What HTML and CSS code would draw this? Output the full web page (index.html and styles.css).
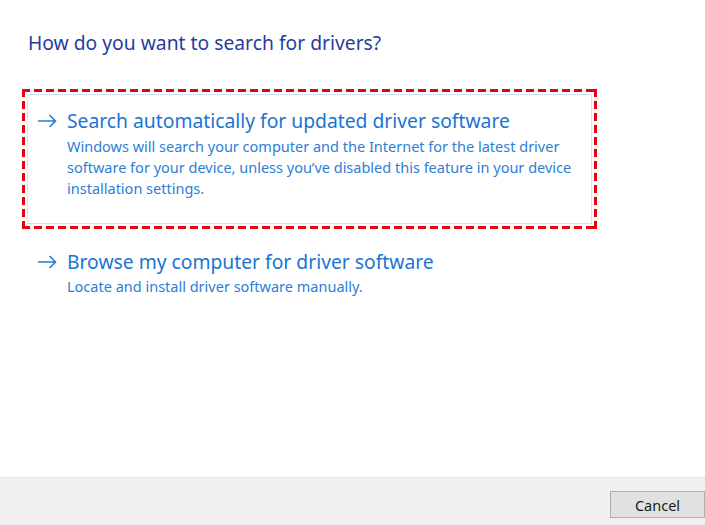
FILE: index.html
```html
<!DOCTYPE html>
<html>
<head>
<meta charset="utf-8">
<link rel="stylesheet" href="styles.css">
</head>
<body>
<div class="dialog">
  <main class="content">
    <h1 class="title">How do you want to search for drivers?</h1>
    <div class="options">
      <div class="frame frame-marked">
        <div class="option option-focused">
          <svg class="arrow" width="20" height="14" viewBox="0 0 20 14"><path d="M1 7H18.5M12.5 1L18.5 7L12.5 13" fill="none" stroke="currentColor" stroke-width="1.6"/></svg>
          <div class="option-text">
            <div class="option-head">Search automatically for updated driver software</div>
            <div class="option-desc">Windows will search your computer and the Internet for the latest driver software for your device, unless you’ve disabled this feature in your device installation settings.</div>
          </div>
        </div>
      </div>
      <div class="frame">
        <div class="option">
          <svg class="arrow" width="20" height="14" viewBox="0 0 20 14"><path d="M1 7H18.5M12.5 1L18.5 7L12.5 13" fill="none" stroke="currentColor" stroke-width="1.6"/></svg>
          <div class="option-text">
            <div class="option-head">Browse my computer for driver software</div>
            <div class="option-desc option-desc-tight">Locate and install driver software manually.</div>
          </div>
        </div>
      </div>
    </div>
  </main>
  <footer class="footer">
    <button class="btn">Cancel</button>
  </footer>
</div>
</body>
</html>
```
FILE: styles.css
```css
html, body {
  margin: 0;
  padding: 0;
  background: #ffffff;
}
body {
  font-family: "Noto Sans", "Open Sans", sans-serif;
}
.dialog {
  width: 705px;
  height: 525px;
  display: flex;
  flex-direction: column;
}
.content {
  flex: 1;
  padding: 0 0 0 22px;
}
.title {
  margin: 30px 0 0 6px;
  font-size: 19.3px;
  font-weight: 400;
  line-height: 26px;
  color: #1f3da0;
}
.options {
  margin-top: 33px;
  display: flex;
  flex-direction: column;
  gap: 1px;
  width: 575px;
}
.frame {
  padding: 5px;
}
.frame-marked {
  background:
    repeating-linear-gradient(90deg, #e8000f 0 8px, transparent 8px 12px) top left / 100% 3px no-repeat,
    repeating-linear-gradient(90deg, #e8000f 0 8px, transparent 8px 12px) bottom left / 100% 3px no-repeat,
    repeating-linear-gradient(180deg, #e8000f 0 8px, transparent 8px 12px) top left / 3px 100% no-repeat,
    repeating-linear-gradient(180deg, #e8000f 0 8px, transparent 8px 12px) top right / 3px 100% no-repeat;
}
.option {
  border: 1px solid transparent;
  display: flex;
  align-items: flex-start;
  padding: 13px 10px 24px 9px;
  color: #1a74d2;
}
.option-focused {
  border-color: #cfe3f6;
}
.arrow {
  flex: none;
  margin-top: 6px;
  width: 20px;
  height: 14px;
  color: #2a7ad2;
}
.option-text {
  margin-left: 10px;
}
.option-head {
  font-size: 19.3px;
  line-height: 26px;
}
.option-desc {
  font-size: 14.5px;
  line-height: 21px;
  color: #2b80d6;
  margin-top: 2px;
}
.option-desc-tight {
  margin-top: 1px;
}
.footer {
  height: 47px;
  border-top: 1px solid #e3e3e3;
  background: #f0f0f0;
  display: flex;
  justify-content: flex-end;
  align-items: flex-start;
}
.btn {
  margin-top: 13px;
  width: 95px;
  height: 27px;
  border: 1px solid #adadad;
  background: #e1e1e1;
  font-family: "Noto Sans", sans-serif;
  font-size: 14.5px;
  color: #1a1a1a;
  padding: 0;
}
```
